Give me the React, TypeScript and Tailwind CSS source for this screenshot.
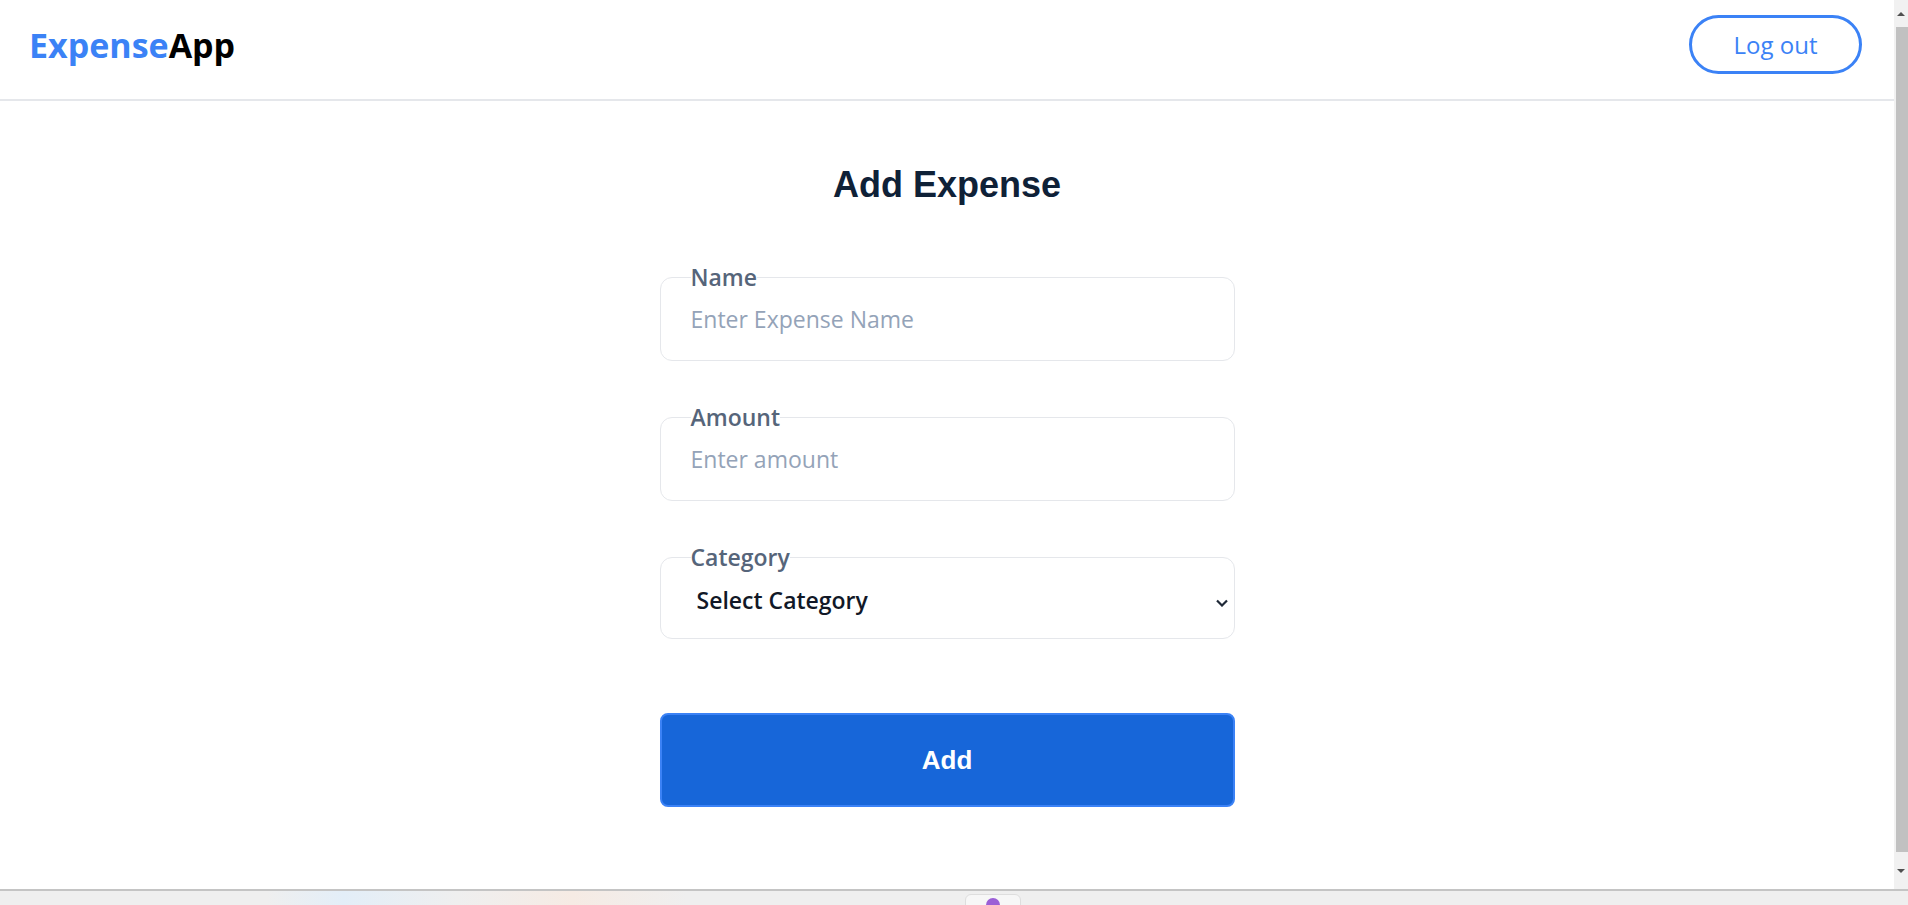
import { useState } from "react";

const sans = "font-['Open_Sans',_'Noto_Sans',_sans-serif]";
const arial = "font-['Liberation_Sans',_Arial,_sans-serif]";

function Field({ label, children }: { label: string; children: React.ReactNode }) {
    return (
        <fieldset className="relative border border-[#e5e7eb] rounded-xl px-[30px]">
            <legend className="text-[23px] font-semibold text-[#56657a] leading-8">{label}</legend>
            {children}
        </fieldset>
    );
}

export default function App() {
    const [name, setName] = useState("");
    const [amount, setAmount] = useState("");
    const [category, setCategory] = useState("");

    return (
        <div className={`h-[905px] w-full flex flex-col overflow-hidden bg-white ${sans}`}>
            <div className="flex h-[889px]">
                <div className="flex-1 flex flex-col">
                    <header className="flex items-center justify-between pl-[29px] pr-8 h-[101px] pb-[10px] border-b-2 border-[#e5e7eb]">
                        <h1 className="text-[34px] font-bold leading-10">
                            <span className="text-[#3b82f6]">Expense</span>
                            <span className="text-black">App</span>
                        </h1>
                        <button className="w-[173px] h-[59px] rounded-full border-[3px] border-[#3b82f6] text-[#3b82f6] text-2xl">
                            Log out
                        </button>
                    </header>

                    <main className="w-[575px] mx-auto flex flex-col">
                        <h2 className={`mt-16 text-4xl leading-10 font-bold text-center text-[#0f2137] ${arial}`}>
                            Add Expense
                        </h2>

                        <form className="flex flex-col" onSubmit={(e) => e.preventDefault()}>
                            <div className="mt-14">
                                <Field label="Name">
                                    <input
                                        type="text"
                                        value={name}
                                        onChange={(e) => setName(e.target.value)}
                                        placeholder="Enter Expense Name"
                                        className="block w-full h-[44px] mt-[4px] mb-[19px] text-[23px] text-[#111827] placeholder:text-[#94a3b8] outline-none"
                                    />
                                </Field>
                            </div>

                            <div className="mt-10">
                                <Field label="Amount">
                                    <input
                                        type="number"
                                        value={amount}
                                        onChange={(e) => setAmount(e.target.value)}
                                        placeholder="Enter amount"
                                        className="block w-full h-[44px] mt-[4px] mb-[19px] text-[23px] text-[#111827] placeholder:text-[#94a3b8] outline-none"
                                    />
                                </Field>
                            </div>

                            <div className="mt-10">
                                <fieldset className="relative border border-[#e5e7eb] rounded-xl pl-[30px]">
                                    <legend className="text-[23px] font-semibold text-[#56657a] leading-8">Category</legend>
                                    <select
                                        value={category}
                                        onChange={(e) => setCategory(e.target.value)}
                                        className="block w-full h-[44px] mt-[5px] mb-[16px] pl-[6px] appearance-none bg-transparent text-[23px] font-semibold text-[#111827] outline-none"
                                    >
                                        <option value="">Select Category</option>
                                        <option value="food">Food</option>
                                        <option value="travel">Travel</option>
                                        <option value="bills">Bills</option>
                                    </select>
                                    <svg
                                        className="absolute right-[6px] top-[26px] w-[12px] h-[8px] pointer-events-none"
                                        viewBox="0 0 12 8"
                                        fill="none"
                                        stroke="#1f2937"
                                        strokeWidth="2.2"
                                    >
                                        <path d="M1 1.5l5 5 5-5" />
                                    </svg>
                                </fieldset>
                            </div>

                            <button
                                type="submit"
                                className={`mt-[74px] h-[94px] rounded-lg border-2 border-[#3b82f6] bg-[#1766d9] text-white text-[26px] font-bold ${arial}`}
                            >
                                Add
                            </button>
                        </form>
                    </main>
                </div>

                {/* scrollbar */}
                <div className="w-[14px] bg-[#f1f1f1] flex flex-col items-end">
                    <div className="h-[27px] w-full flex items-center justify-center">
                        <div className="w-0 h-0 border-l-[4px] border-r-[4px] border-b-[4px] border-l-transparent border-r-transparent border-b-[#505050]" />
                    </div>
                    <div className="w-[12px] h-[825px] bg-[#c1c1c1]" />
                    <div className="flex-1 w-full flex items-center justify-center">
                        <div className="w-0 h-0 border-l-[4px] border-r-[4px] border-t-[4px] border-l-transparent border-r-transparent border-t-[#505050]" />
                    </div>
                </div>
            </div>

            {/* taskbar strip */}
            <div className="flex-1 border-t-2 border-[#c4c4c4] bg-[linear-gradient(90deg,#efefef_0%,#efefef_14%,#e3eef8_18%,#efefef_24%,#f6ebe4_30%,#efefef_36%,#efefef_100%)] relative">
                <div className="absolute left-[965px] top-[3px] w-[56px] h-[20px] rounded-t-md bg-[#f7f7f7] border border-[#dedede] flex justify-center">
                    <div className="mt-[3px] w-[14px] h-[14px] rounded-full bg-[#9b5fd6]" />
                </div>
            </div>
        </div>
    );
}
